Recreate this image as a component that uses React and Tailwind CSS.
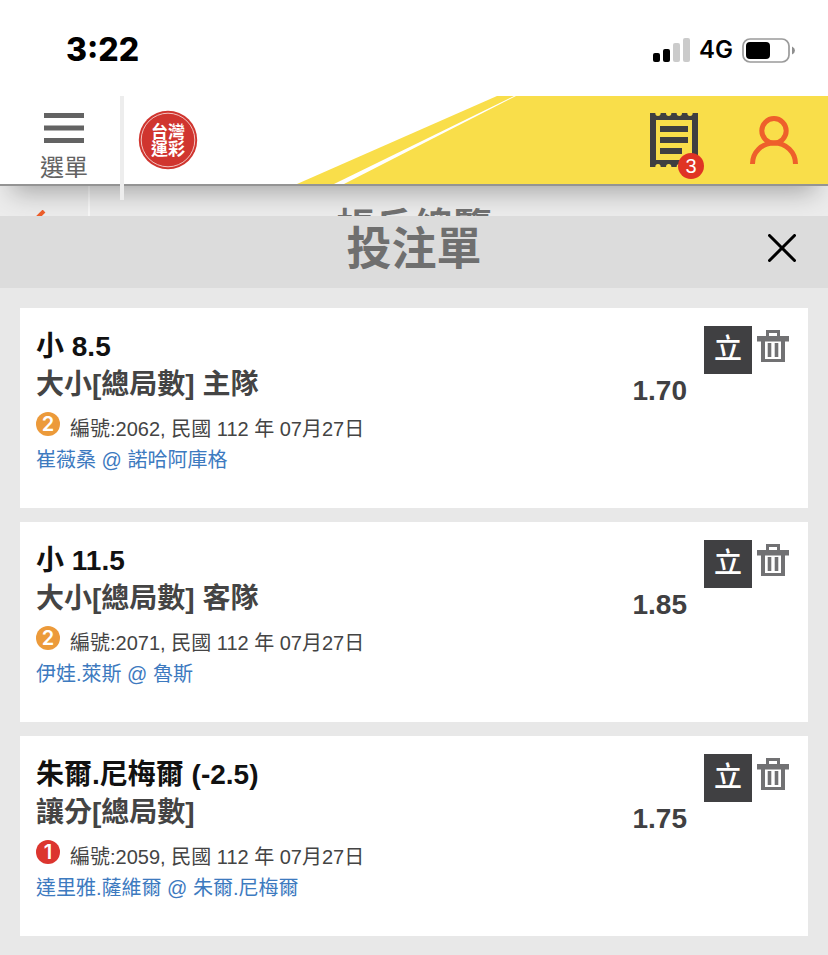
import React from 'react';

const bets = [
  {
    id: '2062',
    pick: '小 8.5',
    market: '大小[總局數] 主隊',
    level: 2,
    date: '民國 112 年 07月27日',
    match: '崔薇桑 @ 諾哈阿庫格',
    odds: '1.70',
  },
  {
    id: '2071',
    pick: '小 11.5',
    market: '大小[總局數] 客隊',
    level: 2,
    date: '民國 112 年 07月27日',
    match: '伊娃.萊斯 @ 魯斯',
    odds: '1.85',
  },
  {
    id: '2059',
    pick: '朱爾.尼梅爾 (-2.5)',
    market: '讓分[總局數]',
    level: 1,
    date: '民國 112 年 07月27日',
    match: '達里雅.薩維爾 @ 朱爾.尼梅爾',
    odds: '1.75',
  },
];

const levelColors = {
  1: 'bg-[#dc352f]',
  2: 'bg-[#ec9a3a]',
};

const MenuIcon = () => (
  <svg width="40" height="30" viewBox="0 0 40 30" fill="#636363">
    <rect y="0" width="40" height="5" />
    <rect y="12.5" width="40" height="5" />
    <rect y="25" width="40" height="5" />
  </svg>
);

const ReceiptIcon = () => (
  <svg width="48" height="54" viewBox="0 0 48 54" fill="#3f3f41">
    <path
      fillRule="evenodd"
      d="M0 0H5.3A2.7 3 0 0 0 10.7 0H16A2.7 3 0 0 0 21.4 0H26.6A2.7 3 0 0 0 32 0H37.3A2.7 3 0 0 0 42.7 0H48V54H42.7A2.7 3 0 0 0 37.3 54H32A2.7 3 0 0 0 26.6 54H21.4A2.7 3 0 0 0 16 54H10.7A2.7 3 0 0 0 5.3 54H0ZM6 7V47H42V7Z"
    />
    <rect x="10" y="13" width="28" height="6" />
    <rect x="10" y="24" width="28" height="6" />
    <rect x="10" y="35" width="22" height="6" />
  </svg>
);

const UserIcon = () => (
  <svg width="48" height="48" viewBox="0 0 48 48" fill="none" stroke="#ee5f2b" strokeWidth="5">
    <circle cx="24" cy="14.8" r="12.2" />
    <path d="M2.5 48C2.5 36 12 27 24 27S45.5 36 45.5 48" />
  </svg>
);

const TrashIcon = () => (
  <svg width="32" height="32" viewBox="0 0 32 32" fill="#717173">
    <path
      fillRule="evenodd"
      d="M9 0H23V6H32V11.5H28V32H4V11.5H0V6H9ZM12 3V6H20V3ZM8 11.5V29H24V11.5Z"
    />
    <rect x="10.7" y="13" width="3.6" height="14" />
    <rect x="17.7" y="13" width="3.6" height="14" />
  </svg>
);

const Logo = () => (
  <svg width="60" height="60" viewBox="0 0 60 60" role="img" aria-label="台灣運彩">
    <circle cx="30" cy="30" r="29.2" fill="#d0352f" />
    <circle cx="30" cy="30" r="26.8" fill="none" stroke="#f3c4c1" strokeWidth="1" />
    <g
      fill="#fff"
      fontSize="17"
      fontWeight="700"
      fontFamily="'Noto Sans CJK TC', sans-serif"
      textAnchor="middle"
    >
      <text x="30" y="28">台灣</text>
      <text x="30" y="45">運彩</text>
    </g>
  </svg>
);

const StatusBar = () => (
  <div className="flex h-24 items-center justify-between bg-white pr-[33px] pl-[66px] text-black">
    <span className="pt-1 font-['Inter',sans-serif] text-[32px] leading-8 font-extrabold">3:22</span>
    <div className="flex items-center gap-[9px] pt-1">
      <svg width="37" height="24" viewBox="0 0 37 24">
        <rect x="0" y="15" width="7" height="9" rx="2" />
        <rect x="10" y="11" width="7" height="13" rx="2" />
        <rect x="20" y="5" width="7" height="19" rx="2" fill="#cbcbcb" />
        <rect x="30" y="0" width="7" height="24" rx="2" fill="#cbcbcb" />
      </svg>
      <span className="font-['Inter',sans-serif] text-2xl leading-6 font-semibold">4G</span>
      <svg width="53" height="25" viewBox="0 0 53 25">
        <rect x="1" y="1" width="46" height="23" rx="7" fill="none" stroke="#9b9b9b" strokeWidth="1.7" />
        <rect x="4" y="4" width="24" height="17" rx="4" />
        <path d="M50 8.5Q53 10 53 12.5T50 16.5Z" fill="#8e8e8e" />
      </svg>
    </div>
  </div>
);

const Header = () => (
  <header className="relative z-10 flex h-[90px] border-b-2 border-[#949494] bg-white shadow-[0_18px_26px_-12px_rgba(0,0,0,0.3)]">
    <button
      type="button"
      className="flex w-[120px] shrink-0 flex-col items-center gap-[11px] pt-[17px] pl-2 text-2xl leading-7 text-[#636363]"
    >
      <MenuIcon />
      選單
    </button>
    <span className="h-[104px] w-1 shrink-0 bg-[#ededed]" />
    <div className="flex flex-1 items-start pt-[14px] pl-[14px]">
      <a href="#home">
        <Logo />
      </a>
    </div>
    <svg width="219" height="88" viewBox="0 0 219 88" className="shrink-0" fill="#f9de4a">
      <path d="M0 88L200 0H217L37 88Z" />
      <path d="M47 88L219 0V88Z" />
    </svg>
    <div className="flex w-[312px] shrink-0 items-start justify-end gap-[52px] bg-[#f9de4a] pt-[17px] pr-[30px]">
      <button type="button" aria-label="投注單 3" className="relative">
        <ReceiptIcon />
        <span className="absolute -right-1.5 -bottom-3 flex size-[26px] items-center justify-center rounded-full bg-[#e03424] text-xl leading-5 text-white">
          3
        </span>
      </button>
      <button type="button" aria-label="會員" className="pt-[3px]">
        <UserIcon />
      </button>
    </div>
  </header>
);

// only the top edge shows, the bet slip lies over the rest
const AccountBar = () => (
  <div className="flex h-[30px] items-start overflow-hidden bg-[#ececec]">
    <button
      type="button"
      aria-label="返回"
      className="flex h-[60px] w-[90px] shrink-0 items-start justify-center border-r-2 border-[#f7f7f7] pt-6 pr-[14px]"
    >
      <svg width="20" height="32" viewBox="0 0 20 32" fill="none" stroke="#ee5f2b" strokeWidth="4">
        <path d="M17 1L3 15L17 29" />
      </svg>
    </button>
    <h2 className="flex-1 pt-[18px] pr-[90px] text-center text-[39px] leading-[48px] font-bold text-[#717171]">
      帳戶總覽
    </h2>
  </div>
);

const BetCard = ({ bet }) => (
  <li className="flex bg-white pr-[19px] pb-[35px] pl-4">
    <div className="flex-1 pt-5">
      <h3 className="text-[28px] leading-[38px] font-bold text-[#111]">{bet.pick}</h3>
      <p className="text-[28px] leading-[38px] font-bold text-[#444]">{bet.market}</p>
      <div className="mt-2 flex items-start gap-[10px]">
        <span
          className={`${levelColors[bet.level]} flex size-6 items-center justify-center rounded-full font-['Inter',sans-serif] text-xl leading-6 font-semibold text-white`}
        >
          {bet.level}
        </span>
        <p className="text-xl leading-[35px] text-[#444]">
          編號:{bet.id}, {bet.date}
        </p>
      </div>
      <a href={`#match-${bet.id}`} className="block text-xl leading-[26px] text-[#3d7abf]">
        {bet.match}
      </a>
    </div>
    <span className="pt-16 text-[28px] leading-[38px] font-bold text-[#404042]">{bet.odds}</span>
    <div className="ml-[17px] flex items-start gap-[5px] pt-[18px]">
      <button type="button" className="size-12 bg-[#404042] text-[28px] leading-[48px] font-medium text-white">
        立
      </button>
      <button type="button" aria-label="刪除" className="pt-1">
        <TrashIcon />
      </button>
    </div>
  </li>
);

const App = () => (
  <div className="min-h-screen bg-[#e8e8e8] font-['Liberation_Sans','Noto_Sans_CJK_TC',sans-serif]">
    <StatusBar />
    <Header />
    <AccountBar />
    <main className="relative z-20 bg-[#e8e8e8]">
      <div className="flex h-[72px] items-center bg-[#dcdcdc] pr-8 pl-[60px]">
        <h1 className="flex-1 pb-1 text-center text-[45px] leading-[60px] font-bold text-[#6f6f6f]">
          投注單
        </h1>
        <button type="button" aria-label="關閉" className="pb-2">
          <svg width="28" height="28" viewBox="0 0 28 28" stroke="#000" strokeWidth="3" strokeLinecap="round">
            <path d="M1.5 1.5L26.5 26.5M26.5 1.5L1.5 26.5" />
          </svg>
        </button>
      </div>
      <ul className="flex flex-col gap-[14px] px-5 pt-5 pb-[19px]">
        {bets.map((bet) => (
          <BetCard key={bet.id} bet={bet} />
        ))}
      </ul>
    </main>
  </div>
);

export default App;
